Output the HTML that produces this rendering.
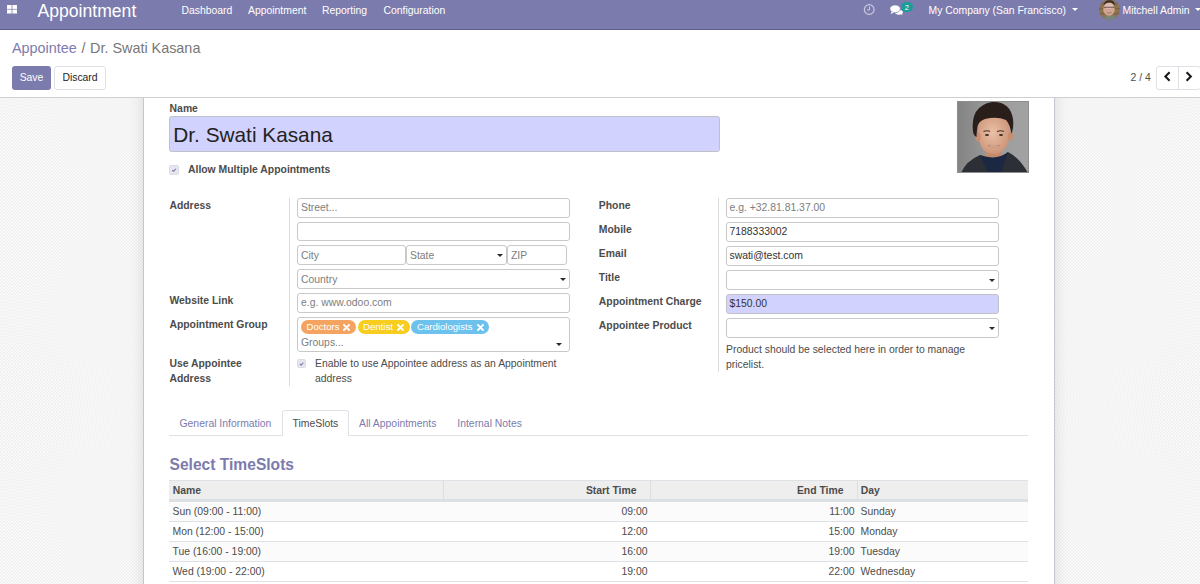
<!DOCTYPE html>
<html><head><meta charset="utf-8">
<style>
*{box-sizing:border-box;margin:0;padding:0}
html,body{width:1200px;height:584px;overflow:hidden;background-color:#f7f7f7;background-image:repeating-conic-gradient(#efefef 0 25%,#fbfbfb 0 50%);background-size:3.2px 3.2px;font-family:"Liberation Sans",sans-serif;font-size:10.4px;color:#4c4c4c}
.a{position:absolute;white-space:nowrap;line-height:12px}
.b{font-weight:bold}
#nav{position:absolute;left:0;top:0;width:1200px;height:30px;background:#7c7bad;border-bottom:1px solid #5f5e8f}
#nav .a{color:#fff}
#cp{position:absolute;z-index:2;left:0;top:30px;width:1200px;height:68px;background:#fff;border-bottom:1px solid #cfcfcf}
.btn{position:absolute;border-radius:3px;text-align:center;line-height:22px;font-size:10.4px}
#sheet{position:absolute;left:143px;top:60px;width:912px;height:540px;background:#fff;border-left:1px solid #c6c6d2;border-right:1px solid #c6c6d2;box-shadow:0 0 14px rgba(0,0,0,0.11)}
.inp{position:absolute;border:1px solid #c9c9c9;border-radius:3px;background:#fff}
.ph{color:#7d7d7d}
.vl{position:absolute;width:1px;background:#dcdcdc}
.caret{position:absolute;width:0;height:0;border-left:3.3px solid transparent;border-right:3.3px solid transparent;border-top:3.2px solid #2a2a2a}
.tag{position:absolute;height:14px;border-radius:7px;color:#fff;line-height:14px;font-size:9.6px;white-space:nowrap}
.cb{position:absolute;width:10px;height:10px;border-radius:2px;background:#e6e6ee;border:1px solid #dcdce6}
.row{position:absolute;left:169px;width:859px;height:20px;border-bottom:1px solid #dee2e6}
</style></head>
<body>
<!-- NAVBAR -->
<div id="nav">
  <svg style="position:absolute;left:7px;top:5px" width="11" height="9" viewBox="0 0 11 9"><rect x="0" y="0" width="4.6" height="3.9" fill="#fff"/><rect x="5.4" y="0" width="4.6" height="3.9" fill="#fff"/><rect x="0" y="4.6" width="4.6" height="3.9" fill="#fff"/><rect x="5.4" y="4.6" width="4.6" height="3.9" fill="#fff"/></svg>
  <div class="a" style="left:37.5px;top:1px;font-size:17.6px;line-height:20px">Appointment</div>
  <div class="a" style="left:181.5px;top:4.5px">Dashboard</div>
  <div class="a" style="left:248px;top:4.5px">Appointment</div>
  <div class="a" style="left:322px;top:4.5px">Reporting</div>
  <div class="a" style="left:383.5px;top:4.5px">Configuration</div>
  <svg style="position:absolute;left:863px;top:4px" width="13" height="13" viewBox="0 0 13 13"><circle cx="6.2" cy="5.5" r="4.9" fill="none" stroke="#cbcae0" stroke-width="1.15"/><path d="M6.5 2.3V5.9H4" fill="none" stroke="#cbcae0" stroke-width="1"/></svg>
  <svg style="position:absolute;left:889px;top:4px" width="16" height="12" viewBox="0 0 16 12"><ellipse cx="9.9" cy="8.3" rx="3.9" ry="2.4" fill="#fff"/><path d="M11.5 10 L13.6 11 L12.6 9z" fill="#fff"/><ellipse cx="6.1" cy="4.8" rx="5.2" ry="3.9" fill="#fff" stroke="#7c7bad" stroke-width="0.7"/><path d="M2.6 7.6 L1.7 9.9 L5 8.4z" fill="#fff"/></svg>
  <div style="position:absolute;left:900.5px;top:1.8px;width:12.5px;height:10.5px;border-radius:5.5px;background:#1a9e99;color:#fff;font-size:7.5px;line-height:11.5px;text-align:center">2</div>
  <div class="a" style="left:928.5px;top:4.5px">My Company (San Francisco)</div>
  <div class="caret" style="left:1072px;top:7.6px;border-top-color:#fff;border-left-width:3px;border-right-width:3px;border-top-width:3px"></div>
  <svg style="position:absolute;left:1099px;top:-1px" width="22" height="22" viewBox="0 0 22 22"><defs><clipPath id="av"><circle cx="10.5" cy="10.7" r="10.4"/></clipPath></defs><g clip-path="url(#av)"><rect width="22" height="22" fill="#8d7450"/><rect x="0" y="4" width="22" height="1.2" fill="#6f5a3c" opacity="0.6"/><rect x="0" y="9" width="22" height="1.2" fill="#6f5a3c" opacity="0.6"/><rect x="0" y="14" width="22" height="1.2" fill="#6f5a3c" opacity="0.6"/><path d="M4 22 Q6 16 11 16 Q17 16 19 22z" fill="#7b857c"/><ellipse cx="10" cy="10" rx="5.8" ry="6.8" fill="#d2a593"/><ellipse cx="10" cy="7" rx="4" ry="3" fill="#e3c3b5" opacity="0.7"/><path d="M4.5 7 Q5 1 10.5 1.2 Q16 1 16 7 Q14.5 3.5 10.5 3.5 Q6 3.5 4.5 7z" fill="#3a2d25"/><path d="M5 8.3 H15.5" stroke="#4a4040" stroke-width="1" opacity="0.75"/><path d="M8 13.5 Q10 14.8 12.5 13.5" stroke="#9a6a5a" stroke-width="0.8" fill="none"/></g></svg>
  <div class="a" style="left:1122.5px;top:4.5px">Mitchell Admin</div>
  <div class="caret" style="left:1195px;top:7.6px;border-top-color:#fff"></div>
</div>

<!-- CONTROL PANEL -->
<div id="cp">
  <div class="a" style="left:12px;top:9px;font-size:14.4px;line-height:18px;color:#7c7bad">Appointee</div><div class="a" style="left:81.5px;top:9px;font-size:14.4px;line-height:18px;color:#777">/</div><div class="a" style="left:90px;top:9px;font-size:14.4px;line-height:18px;color:#777">Dr. Swati Kasana</div>
  <div class="btn" style="left:12px;top:36px;width:39px;height:24px;background:#7c7bad;color:#fff;line-height:24px">Save</div>
  <div class="btn" style="left:54px;top:36px;width:52px;height:24px;background:#fff;border:1px solid #dee2e6;color:#212529">Discard</div>
  <div class="a" style="left:1130.5px;top:42px;color:#4c4c4c">2 / 4</div>
  <div style="position:absolute;left:1155.5px;top:36px;width:45px;height:24px;border:1px solid #dee2e6;border-radius:3px;background:#fff"></div>
  <div style="position:absolute;left:1178px;top:36px;width:1px;height:24px;background:#dee2e6"></div>
  <svg style="position:absolute;left:1163px;top:40.8px" width="9" height="11" viewBox="0 0 9 11"><path d="M6.6 1.3 L2.4 5.5 L6.6 9.7" fill="none" stroke="#1a1a1a" stroke-width="2.1"/></svg>
  <svg style="position:absolute;left:1185px;top:40.8px" width="9" height="11" viewBox="0 0 9 11"><path d="M1.6 1.3 L5.8 5.5 L1.6 9.7" fill="none" stroke="#1a1a1a" stroke-width="2.1"/></svg>
</div>

<!-- SHEET -->
<div id="sheet"></div>
<div id="content">
  <div class="a b" style="left:169.6px;top:103px">Name</div>
  <div class="inp" style="left:169px;top:116px;width:551px;height:35.5px;background:#d2d2ff;border-color:#c2c2c6;border-radius:2.5px"></div>
  <div class="a" style="left:173.3px;top:122.8px;font-size:20.8px;line-height:24px;color:#222">Dr. Swati Kasana</div>
  <div class="cb" style="left:169px;top:165px"><svg width="8" height="8" viewBox="0 0 8 8" style="position:absolute;left:0;top:0"><path d="M2.3 4.2 L3.5 5.4 L5.8 2.8" fill="none" stroke="#7c7bad" stroke-width="1.1"/></svg></div>
  <div class="a b" style="left:188px;top:164px">Allow Multiple Appointments</div>
  <!-- photo -->
  <svg style="position:absolute;left:957px;top:101px" width="72" height="72" viewBox="0 0 72 72">
    <defs><linearGradient id="pg" x1="0" y1="0" x2="1" y2="0"><stop offset="0" stop-color="#838383"/><stop offset="0.5" stop-color="#9c9c9c"/><stop offset="1" stop-color="#a2a2a2"/></linearGradient>
    <radialGradient id="sk" cx="0.45" cy="0.45" r="0.65"><stop offset="0" stop-color="#e9c0a6"/><stop offset="1" stop-color="#c98f72"/></radialGradient></defs>
    <rect x="0" y="0" width="72" height="72" fill="url(#pg)"/>
    <rect x="29" y="42" width="16" height="14" fill="#c48a6c"/>
    <path d="M4 72 Q9 60 23 54 L37 62 L51 51 Q63 57 71 72z" fill="#2c2f35"/>
    <path d="M23 54 L31 72 L44 72 L51 51 Q40 60 23 54z" fill="#1c2841"/>
    <path d="M21 28 Q21 53 37 53 Q53 52 53 28 Q53 14 37 14 Q21 14 21 28z" fill="url(#sk)"/>
    <ellipse cx="21" cy="36" rx="2.6" ry="4.2" fill="#c88e70"/>
    <ellipse cx="53.5" cy="35" rx="2.6" ry="4.2" fill="#c88e70"/>
    <path d="M16 31 Q13 5 35 1 Q53 0 56 18 Q57 26 54.5 33 Q53 23 49 19 Q40 15 28 18 Q22 20 20.5 25 Q19.5 31 19.5 36 Q17 35 16 31z" fill="#2a1e1a"/>
    <path d="M26.5 30.5 Q30 29 33 30.5 M40 30.5 Q44 29 47 30.5" stroke="#4a3228" stroke-width="1.2" fill="none"/>
    <ellipse cx="30" cy="34" rx="2" ry="1" fill="#3a2a25"/>
    <ellipse cx="44" cy="34" rx="2" ry="1" fill="#3a2a25"/>
    <path d="M31 44.5 Q37 48.5 43 44.5 Q37 46.5 31 44.5z" fill="#fff" stroke="#b07862" stroke-width="0.6"/>
    <rect x="0.5" y="0.5" width="71" height="71" fill="none" stroke="#8e8e8e" stroke-width="1"/>
  </svg>

  <!-- left group -->
  <div class="a b" style="left:169.4px;top:200px">Address</div>
  <div class="a b" style="left:169.4px;top:295.3px">Website Link</div>
  <div class="a b" style="left:169.4px;top:319.3px">Appointment Group</div>
  <div class="a b" style="left:169.4px;top:357px;line-height:14.5px;white-space:normal;width:90px">Use Appointee Address</div>
  <div class="vl" style="left:289px;top:198px;height:188px"></div>
  <div class="inp" style="left:297px;top:198px;width:273px;height:20px"></div>
  <div class="a ph" style="left:301px;top:202px">Street...</div>
  <div class="inp" style="left:297px;top:222px;width:273px;height:19px"></div>
  <div class="inp" style="left:297px;top:245px;width:108.5px;height:20px"></div>
  <div class="a ph" style="left:301px;top:250px">City</div>
  <div class="inp" style="left:406px;top:245px;width:100.5px;height:20px"></div>
  <div class="a ph" style="left:410px;top:250px">State</div>
  <div class="caret" style="left:497.2px;top:254px"></div>
  <div class="inp" style="left:507px;top:245px;width:60px;height:20px"></div>
  <div class="a ph" style="left:511px;top:250px">ZIP</div>
  <div class="inp" style="left:297px;top:269px;width:273px;height:19.5px"></div>
  <div class="a ph" style="left:301px;top:274px">Country</div>
  <div class="caret" style="left:559.8px;top:278px"></div>
  <div class="inp" style="left:297px;top:293px;width:273px;height:19.5px"></div>
  <div class="a ph" style="left:301px;top:297px">e.g. www.odoo.com</div>
  <div class="inp" style="left:297px;top:317px;width:273px;height:34.5px"></div>
  <div class="tag" style="left:301px;top:320px;width:55px;background:#f4a460"><span style="position:absolute;left:5.5px;top:0">Doctors</span><svg class="x" width="7" height="7" viewBox="0 0 7 7" style="position:absolute;top:3.5px;left:42px"><path d="M1 1L6 6M6 1L1 6" stroke="#fff" stroke-width="1.9" stroke-linecap="round"/></svg></div>
  <div class="tag" style="left:358px;top:320px;width:52px;background:#f7cd1f"><span style="position:absolute;left:5px;top:0">Dentist</span><svg class="x" width="7" height="7" viewBox="0 0 7 7" style="position:absolute;top:3.5px;left:38.7px"><path d="M1 1L6 6M6 1L1 6" stroke="#fff" stroke-width="1.9" stroke-linecap="round"/></svg></div>
  <div class="tag" style="left:411px;top:320px;width:77.5px;background:#6cc1ed"><span style="position:absolute;left:6px;top:0">Cardiologists</span><svg class="x" width="7" height="7" viewBox="0 0 7 7" style="position:absolute;top:3.5px;left:65.5px"><path d="M1 1L6 6M6 1L1 6" stroke="#fff" stroke-width="1.9" stroke-linecap="round"/></svg></div>
  <div class="a ph" style="left:301px;top:336.7px">Groups...</div>
  <div class="caret" style="left:556px;top:343px"></div>
  <div class="cb" style="left:297px;top:358.8px;width:9px;height:9px"><svg width="8" height="8" viewBox="0 0 8 8" style="position:absolute;left:0;top:0"><path d="M1.9 3.9 L3.1 5.1 L5.4 2.5" fill="none" stroke="#7c7bad" stroke-width="1.1"/></svg></div>
  <div class="a" style="left:315px;top:357px;line-height:14.6px;white-space:normal;width:260px">Enable to use Appointee address as an Appointment address</div>

  <!-- right group -->
  <div class="a b" style="left:598.8px;top:200px">Phone</div>
  <div class="a b" style="left:598.8px;top:224px">Mobile</div>
  <div class="a b" style="left:598.8px;top:248px">Email</div>
  <div class="a b" style="left:598.8px;top:272px">Title</div>
  <div class="a b" style="left:598.8px;top:296px">Appointment Charge</div>
  <div class="a b" style="left:598.8px;top:320px">Appointee Product</div>
  <div class="vl" style="left:718px;top:198px;height:174px"></div>
  <div class="inp" style="left:726px;top:198px;width:273px;height:19.5px"></div>
  <div class="a ph" style="left:729.5px;top:202px">e.g. +32.81.81.37.00</div>
  <div class="inp" style="left:726px;top:222px;width:273px;height:19.5px"></div>
  <div class="a" style="left:729.5px;top:226px;color:#333">7188333002</div>
  <div class="inp" style="left:726px;top:246px;width:273px;height:19.5px"></div>
  <div class="a" style="left:729.5px;top:250px;color:#333">swati@test.com</div>
  <div class="inp" style="left:726px;top:270px;width:273px;height:19.5px"></div>
  <div class="caret" style="left:989px;top:278.5px"></div>
  <div class="inp" style="left:726px;top:294px;width:273px;height:19.5px;background:#d2d2ff;border-color:#c2c2c6"></div>
  <div class="a" style="left:729.5px;top:297.8px;color:#333">$150.00</div>
  <div class="inp" style="left:726px;top:318px;width:273px;height:19.5px"></div>
  <div class="caret" style="left:989px;top:326.5px"></div>
  <div class="a" style="left:726px;top:342.4px;line-height:15px;white-space:normal;width:270px">Product should be selected here in order to manage pricelist.</div>

  <!-- tabs -->
  <div style="position:absolute;left:169px;top:435px;width:859px;height:1px;background:#dee2e6"></div>
  <div style="position:absolute;left:282px;top:410px;width:67px;height:26px;border:1px solid #dee2e6;border-bottom:none;border-radius:3px 3px 0 0;background:#fff"></div>
  <div class="a" style="left:179.5px;top:417.5px;color:#7c7bad">General Information</div>
  <div class="a" style="left:292.5px;top:417.5px;color:#4c4c4c">TimeSlots</div>
  <div class="a" style="left:359px;top:417.5px;color:#7c7bad">All Appointments</div>
  <div class="a" style="left:457.3px;top:417.5px;color:#7c7bad">Internal Notes</div>

  <div class="a b" style="left:169.5px;top:456.3px;font-size:15.6px;line-height:18px;color:#7c7bad">Select TimeSlots</div>

  <!-- table -->
  <div style="position:absolute;left:169px;top:480px;width:859px;height:22px;background:#eee;border-top:1px solid #dee2e6;border-bottom:3px solid #dcdfe4"></div>
  <div class="vl" style="left:443px;top:481px;height:19px;background:#dedede"></div>
  <div class="vl" style="left:650px;top:481px;height:19px;background:#dedede"></div>
  <div class="vl" style="left:857px;top:481px;height:19px;background:#dedede"></div>
  <div class="a b" style="left:172.8px;top:485px;color:#4c4c4c">Name</div>
  <div class="a b" style="left:436px;top:485px;width:200.5px;text-align:right;color:#4c4c4c">Start Time</div>
  <div class="a b" style="left:643px;top:485px;width:200.5px;text-align:right;color:#4c4c4c">End Time</div>
  <div class="a b" style="left:860.8px;top:485px;color:#4c4c4c">Day</div>

  <div class="row" style="top:502px;background:#fbfbfb"></div>
  <div class="row" style="top:522px;background:#fff"></div>
  <div class="row" style="top:542px;background:#fbfbfb"></div>
  <div class="row" style="top:562px;background:#fff"></div>

  <div class="a" style="left:172.5px;top:505.5px">Sun (09:00 - 11:00)</div>
  <div class="a" style="left:447px;top:505.5px;width:200.5px;text-align:right">09:00</div>
  <div class="a" style="left:654px;top:505.5px;width:200.5px;text-align:right">11:00</div>
  <div class="a" style="left:860.5px;top:505.5px">Sunday</div>

  <div class="a" style="left:172.5px;top:525.5px">Mon (12:00 - 15:00)</div>
  <div class="a" style="left:447px;top:525.5px;width:200.5px;text-align:right">12:00</div>
  <div class="a" style="left:654px;top:525.5px;width:200.5px;text-align:right">15:00</div>
  <div class="a" style="left:860.5px;top:525.5px">Monday</div>

  <div class="a" style="left:172.5px;top:545.5px">Tue (16:00 - 19:00)</div>
  <div class="a" style="left:447px;top:545.5px;width:200.5px;text-align:right">16:00</div>
  <div class="a" style="left:654px;top:545.5px;width:200.5px;text-align:right">19:00</div>
  <div class="a" style="left:860.5px;top:545.5px">Tuesday</div>

  <div class="a" style="left:172.5px;top:565.5px">Wed (19:00 - 22:00)</div>
  <div class="a" style="left:447px;top:565.5px;width:200.5px;text-align:right">19:00</div>
  <div class="a" style="left:654px;top:565.5px;width:200.5px;text-align:right">22:00</div>
  <div class="a" style="left:860.5px;top:565.5px">Wednesday</div>
</div>
</body></html>
